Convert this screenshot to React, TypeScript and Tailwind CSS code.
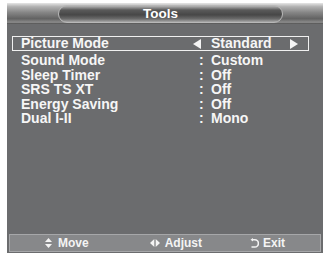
import React from "react";

const font = { fontFamily: '"Liberation Sans", Arial, sans-serif' };

function LeftTri() {
  return (
    <svg width="8" height="10" viewBox="0 0 8 10">
      <polygon points="8,0 8,10 0,5" fill="#f4f4f4" />
    </svg>
  );
}
function RightTri() {
  return (
    <svg width="8" height="10" viewBox="0 0 8 10">
      <polygon points="0,0 0,10 8,5" fill="#f4f4f4" />
    </svg>
  );
}

const rows: [string, string][] = [
  ["Sound Mode", "Custom"],
  ["Sleep Timer", "Off"],
  ["SRS TS XT", "Off"],
  ["Energy Saving", "Off"],
  ["Dual I-II", "Mono"],
];

export default function App() {
  return (
    <div className="w-[329px] h-[256px] bg-white pt-[3px] pl-[7px]" style={font}>
      <div className="w-[316px] h-[250px] bg-[#6b6c6e] flex flex-col">
        {/* header */}
        <div className="relative h-[21px] flex items-center bg-[linear-gradient(to_bottom,#e6e6e6_0%,#b0b0b0_18%,#868686_45%,#626262_75%,#8c8c8c_92%,#4a4a4a_100%)]">
          <div className="ml-[51px] w-[225px] h-[18px] rounded-full border border-[#b8b8b8] bg-[linear-gradient(to_bottom,#b5b5b5_0%,#5a5a5a_25%,#474747_55%,#6a6a6a_80%,#a8a8a8_100%)] flex items-center">
            <span className="ml-[84px] text-[13.5px] font-bold leading-none text-white">Tools</span>
          </div>
        </div>
        {/* rows */}
        <div className="pl-[5px] pt-[12px] text-[14px] font-bold text-[#f6f6f6]">
          <div className="w-[297px] h-[15px] border border-[#f0f0f0] flex items-center pl-[8px] leading-[13px]">
            <span className="w-[172px] whitespace-nowrap">Picture Mode</span>
            <LeftTri />
            <span className="w-[10px]" />
            <span className="w-[79px] whitespace-nowrap">Standard</span>
            <RightTri />
          </div>
          <div className="pt-[2px]">
            {rows.map(([l, v]) => (
              <div key={l} className="h-[14.6px] leading-[14.6px] flex pl-[9px] whitespace-nowrap">
                <span className="w-[177px]">{l}</span>
                <span className="w-[13px] pl-[1px]">:</span>
                <span>{v}</span>
              </div>
            ))}
          </div>
        </div>
        {/* footer */}
        <div className="mt-auto mx-[2px] mb-[1px] h-[18px] bg-[#87888a] border border-[#a6a7a9] flex items-center text-[12px] font-bold text-[#f4f4f4] leading-none">
          <div className="ml-[35px] flex items-center">
            <svg width="7" height="10" viewBox="0 0 7 10">
              <polygon points="3.5,0 7,4 0,4" fill="#f4f4f4" />
              <polygon points="0,6 7,6 3.5,10" fill="#f4f4f4" />
            </svg>
            <span className="ml-[6px]">Move</span>
          </div>
          <div className="ml-[61px] flex items-center">
            <svg width="10" height="8" viewBox="0 0 10 8">
              <polygon points="4.3,0 4.3,8 0,4" fill="#f4f4f4" />
              <polygon points="5.7,0 5.7,8 10,4" fill="#f4f4f4" />
            </svg>
            <span className="ml-[5px]">Adjust</span>
          </div>
          <div className="ml-[48px] flex items-center">
            <svg width="9" height="10" viewBox="0 0 9 10">
              <path d="M2.2 1.8 H4.8 A3.6 3.6 0 0 1 4.8 9 H1.5" fill="none" stroke="#f4f4f4" strokeWidth="1.6" />
              <polygon points="0.5,1.8 3,0 3,3.6" fill="#f4f4f4" />
            </svg>
            <span className="ml-[4px]">Exit</span>
          </div>
        </div>
      </div>
    </div>
  );
}
